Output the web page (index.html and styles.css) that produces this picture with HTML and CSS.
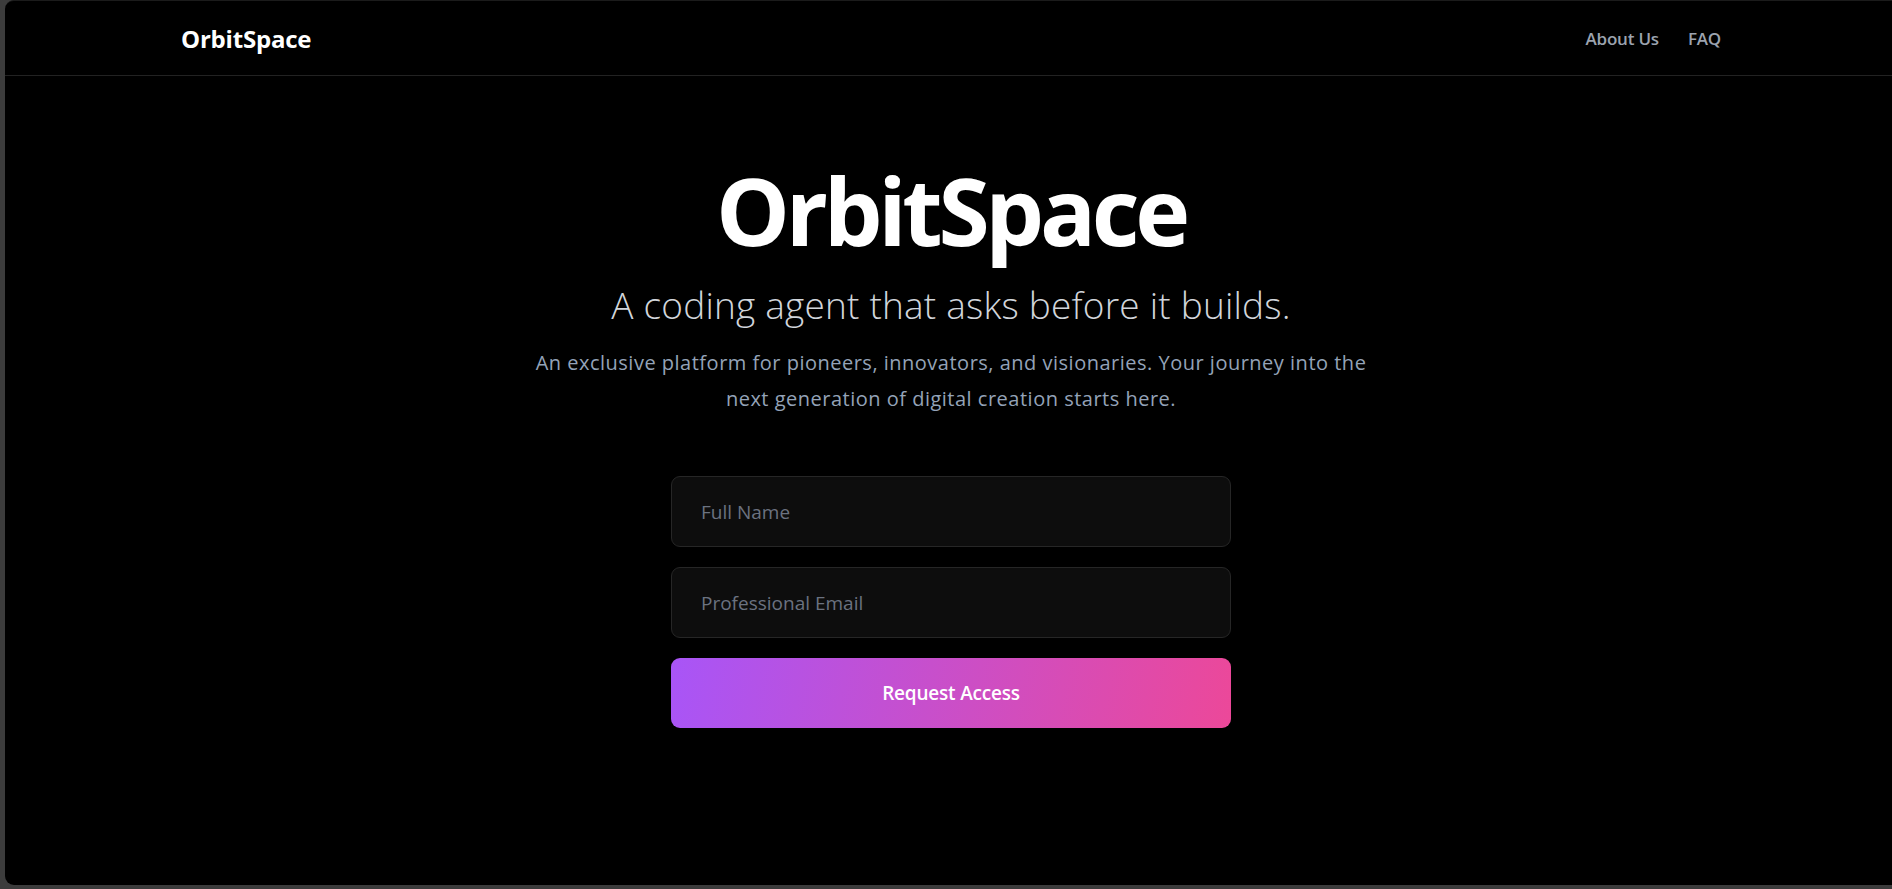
FILE: index.html
```html
<!DOCTYPE html>
<html lang="en">
<head>
<meta charset="utf-8">
<title>OrbitSpace</title>
<link rel="stylesheet" href="styles.css">
</head>
<body>
<div class="window">
  <header class="nav">
    <div class="nav-inner">
      <a class="logo" href="#">OrbitSpace</a>
      <nav class="links">
        <a href="#">About Us</a>
        <a href="#">FAQ</a>
      </nav>
    </div>
  </header>
  <main class="hero">
    <h1 class="title">OrbitSpace</h1>
    <p class="subtitle">A coding agent that asks before it builds.</p>
    <p class="lead">An exclusive platform for pioneers, innovators, and visionaries. Your journey into the next generation of digital creation starts here.</p>
    <form class="form">
      <input class="field" type="text" placeholder="Full Name">
      <input class="field" type="email" placeholder="Professional Email">
      <button class="btn" type="button">Request Access</button>
    </form>
  </main>
</div>
</body>
</html>
```

FILE: styles.css
```css
* { box-sizing: border-box; }
html, body { margin: 0; padding: 0; }
body {
  background: #3c3c3c;
  width: 1892px;
  height: 889px;
  overflow: hidden;
  font-family: "Open Sans", "Noto Sans", sans-serif;
}
.window {
  margin-left: 5px;
  width: 1892px;
  height: 885px;
  background: #000;
  border-top: 1px solid #1b1b1b;
  border-radius: 9px 0 0 9px;
  overflow: hidden;
}
.nav {
  border-bottom: 1px solid #222;
}
.nav-inner {
  width: 1540px;
  margin: 0 auto;
  height: 74px;
  display: flex;
  align-items: center;
  justify-content: space-between;
}
.logo {
  color: #fff;
  font-weight: 700;
  font-size: 24px;
  letter-spacing: -0.2px;
  text-decoration: none;
}
.links {
  display: flex;
  gap: 29px;
  padding-top: 1px;
}
.links a {
  color: #9ca3af;
  text-decoration: none;
  font-size: 17px;
  font-weight: 600;
  letter-spacing: -0.2px;
}
.hero {
  display: flex;
  flex-direction: column;
  align-items: center;
  text-align: center;
  padding-top: 88px;
}
.title {
  margin: 0;
  color: #fff;
  font-size: 93px;
  font-weight: 700;
  line-height: 1;
  letter-spacing: -4.3px;
}
.subtitle {
  margin: 26px 0 0;
  color: #d1d5db;
  font-size: 37px;
  font-weight: 300;
  line-height: 1.2;
  letter-spacing: 0.2px;
}
.lead {
  margin: 18px 0 0;
  max-width: 850px;
  color: #94a3b8;
  font-size: 20px;
  font-weight: 400;
  line-height: 36px;
  letter-spacing: 0.5px;
}
.form {
  margin-top: 59px;
  width: 560px;
  display: flex;
  flex-direction: column;
  gap: 20px;
}
.field {
  height: 71px;
  width: 100%;
  background: #0d0d0d;
  border: 1px solid #262626;
  border-radius: 9px;
  padding: 0 29px;
  font-family: inherit;
  font-size: 19px;
  color: #e5e7eb;
  outline: none;
}
.field::placeholder {
  color: #6b7280;
}
.btn {
  height: 70px;
  width: 100%;
  border: none;
  border-radius: 9px;
  background: linear-gradient(100deg, #a855f7 0%, #ec4899 100%);
  color: #fff;
  font-family: inherit;
  font-size: 19px;
  font-weight: 600;
  letter-spacing: -0.2px;
  cursor: pointer;
}
```
